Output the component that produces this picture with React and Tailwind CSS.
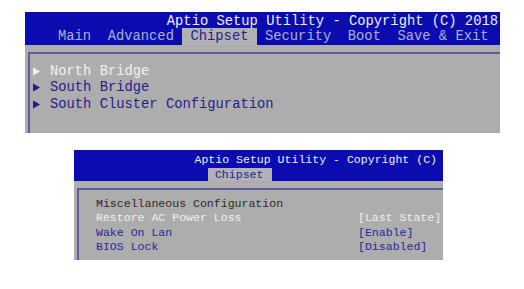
const mono = { fontFamily: '"Liberation Mono", "DejaVu Sans Mono", monospace' }

function Arrow({ color }) {
  return (
    <svg width="8" height="9" viewBox="0 0 8 9" className="shrink-0 mb-[2px]">
      <polygon points="0,0.5 7,4.5 0,8.5" fill={color} />
    </svg>
  )
}

function MainMenu() {
  const items = [
    { label: "North Bridge", active: true },
    { label: "South Bridge" },
    { label: "South Cluster Configuration" },
  ]
  return (
    <div className="ml-[25px] mt-[12px] w-[475px] text-[13.8px]" style={mono}>
      <div className="bg-[#0a0cb0] h-[33px] flex flex-col">
        <div className="h-[16px] leading-[19px] text-right pr-[2px] text-[#eeeef4] whitespace-pre">
          Aptio Setup Utility - Copyright (C) 2018
        </div>
        <div className="h-[17px] leading-[18px] flex text-[#a9b1d6] whitespace-pre pl-[33px]">
          <span>Main  Advanced </span>
          <span className="bg-[#b2b2b4] text-[#23238c]"> Chipset </span>
          <span> Security  Boot  Save &amp; Exit</span>
        </div>
      </div>
      <div className="bg-[#adadad] h-[88px] flex flex-col">
        <div className="mt-[7px] ml-[3px] flex-1 border-t-2 border-l-2 border-[#5c5c9c] pt-[10px] pl-[3px]">
          {items.map((it) => (
            <div key={it.label} className="flex items-center h-[16.5px] whitespace-pre">
              <Arrow color={it.active ? "#f2f2f2" : "#1e1e8e"} />
              <span className={`ml-[9px] ${it.active ? "text-[#f2f2f2]" : "text-[#1e1e8e]"}`}>{it.label}</span>
            </div>
          ))}
        </div>
      </div>
    </div>
  )
}

function MiscPanel() {
  const rows = [
    { label: "Restore AC Power Loss", value: "[Last State]", active: true },
    { label: "Wake On Lan", value: "[Enable]" },
    { label: "BIOS Lock", value: "[Disabled]" },
  ]
  return (
    <div className="ml-[74px] mt-[17px] w-[369px] text-[11.55px]" style={mono}>
      <div className="bg-[#0a0cb0] h-[31px] flex flex-col">
        <div className="h-[18px] leading-[19px] text-right pr-[6px] text-[#eeeef4] whitespace-pre">
          Aptio Setup Utility - Copyright (C)
        </div>
        <div className="h-[13px] leading-[13px] flex pl-[134px] whitespace-pre">
          <span className="bg-[#b2b2b4] text-[#23238c] w-[64px]"> Chipset</span>
        </div>
      </div>
      <div className="bg-[#adadad] h-[79px] flex flex-col">
        <div className="mt-[7px] ml-[3px] flex-1 border-t-2 border-l-2 border-[#5c5c9c] pt-[7px] pl-[17px]">
          <div className="h-[14.3px] leading-[14.3px] text-[#2a2a2e] whitespace-pre">Miscellaneous Configuration</div>
          {rows.map((r) => (
            <div
              key={r.label}
              className={`grid grid-cols-[262px_1fr] h-[14.3px] leading-[14.3px] whitespace-pre ${
                r.active ? "text-[#f0f0f0]" : "text-[#26269a]"
              }`}
            >
              <span>{r.label}</span>
              <span>{r.value}</span>
            </div>
          ))}
        </div>
      </div>
    </div>
  )
}

export default function App() {
  return (
    <div className="w-[524px] h-[289px] bg-white overflow-hidden flex flex-col">
      <MainMenu />
      <MiscPanel />
    </div>
  )
}
